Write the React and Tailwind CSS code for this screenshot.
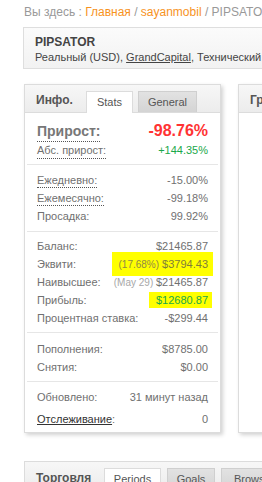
import React from "react";

const F = { fontFamily: '"Liberation Sans", Arial, sans-serif' };

function Row({ label, value, dotted, className = "", children }) {
  return (
    <div className={"flex items-center justify-between whitespace-nowrap h-[18px] " + className}>
      <span
        className={
          "leading-[14px] text-[#707070] " +
          (dotted ? "border-b border-dotted border-[#555]" : "")
        }
      >
        {label}
      </span>
      <span className="text-[#707070]">{children ?? value}</span>
    </div>
  );
}

function Divider() {
  return <div className="h-px bg-[#e6e6e6] mx-[-10px]" />;
}

export default function App() {
  return (
    <div
      className="w-[262px] h-[482px] overflow-hidden bg-white text-[11px]"
      style={F}
    >
      <div className="pl-[24px] pt-[4px] h-[27px] whitespace-nowrap text-[12px] leading-[16px] text-[#999]">
        Вы здесь : <span className="text-[#f7931e]">Главная</span> /{" "}
        <span className="text-[#f7931e]">sayanmobil</span> / PIPSATOR
      </div>

      <div className="ml-[23px] w-[320px] h-[42px] border border-[#dedede] bg-gradient-to-b from-[#fbfbfb] to-[#f2f2f2] pl-[11px] pt-[7px] whitespace-nowrap">
        <div className="font-bold text-[12px] leading-[15px] text-[#444]">PIPSATOR</div>
        <div className="text-[11px] leading-[14px] text-[#444]">
          Реальный (USD), <span className="underline">GrandCapital</span>, Технический
        </div>
      </div>

      <div className="flex gap-[17px] ml-[24px] mt-[15px]">
        <div className="w-[197px] h-[349px] shrink-0 border border-[#dcdcdc] bg-white shadow-[2px_2px_4px_rgba(0,0,0,0.18)] flex flex-col">
          <div className="h-[28px] shrink-0 bg-gradient-to-b from-[#f7f7f7] to-[#ececec] border-b border-[#dcdcdc] flex items-end pl-[11px]">
            <div className="font-bold text-[12px] text-[#555] self-center mt-[2px] w-[50px]">Инфо.</div>
            <div className="h-[22px] w-[47px] bg-white border border-[#dcdcdc] border-b-0 mb-[-1px] flex items-center justify-center text-[11px] text-[#555]">
              Stats
            </div>
            <div className="ml-[5px] h-[21px] w-[59px] bg-gradient-to-b from-[#e2e2e2] to-[#d4d4d4] border border-[#cfcfcf] border-b-0 flex items-center justify-center text-[11px] text-[#555]">
              General
            </div>
          </div>

          <div className="px-[12px] flex flex-col">
            <div className="pt-[8px] pb-[4px]">
              <div className="flex items-center justify-between h-[20px]">
                <span className="font-bold text-[14px] leading-[20px] text-[#777] border-b border-dotted border-[#555]">
                  Прирост:
                </span>
                <span className="font-bold text-[16px] text-[#ff3333]">-98.76%</span>
              </div>
              <div className="flex items-center justify-between h-[19px]">
                <span className="leading-[16px] text-[#707070] border-b border-dotted border-[#555]">
                  Абс. прирост:
                </span>
                <span className="text-[#1aa84a]">+144.35%</span>
              </div>
            </div>
            <Divider />
            <div className="pt-[6px] pb-[6px] flex flex-col">
              <Row label="Ежедневно:" value="-15.00%" dotted />
              <Row label="Ежемесячно:" value="-99.18%" dotted />
              <Row label="Просадка:" value="99.92%" />
            </div>
            <Divider />
            <div className="pt-[5px] pb-[5px] flex flex-col">
              <Row label="Баланс:" value="$21465.87" />
              <Row label="Эквити:">
                <span className="bg-[#ffff00] pl-[6px] pr-[5px] mr-[-5px] py-[6px] text-[#7f7d3a]">
                  <span className="text-[10px] text-[#8f8a45]">(17.68%)</span> $3794.43
                </span>
              </Row>
              <Row label="Наивысшее:">
                <span className="text-[10px] text-[#a8a8a8]">(May 29) </span>$21465.87
              </Row>
              <Row label="Прибыль:">
                <span className="bg-[#ffff00] pl-[7px] pr-[4px] mr-[-4px] py-[2px] text-[#1aa84a]">$12680.87</span>
              </Row>
              <Row label="Процентная ставка:" value="-$299.44" />
            </div>
            <Divider />
            <div className="pt-[7px] pb-[5px] flex flex-col">
              <Row label="Пополнения:" value="$8785.00" className="h-[17px]" />
              <Row label="Снятия:" value="$0.00" className="h-[17px]" />
            </div>
            <Divider />
            <div className="pt-[6px] flex flex-col">
              <Row label="Обновлено:" value="31 минут назад" className="h-[17px]" />
              <div className="flex items-center justify-between h-[17px] mt-[5px]">
                <span className="text-[#707070]">
                  <span className="underline text-[#333]">Отслеживание</span>:
                </span>
                <span className="text-[#707070]">0</span>
              </div>
            </div>
          </div>
        </div>

        <div className="w-[120px] h-[349px] shrink-0 border border-[#dcdcdc] bg-white shadow-[2px_2px_4px_rgba(0,0,0,0.18)]">
          <div className="h-[28px] bg-gradient-to-b from-[#f7f7f7] to-[#ececec] border-b border-[#dcdcdc] flex items-center pl-[11px] pt-[2px]">
            <span className="font-bold text-[12px] text-[#555]">График</span>
          </div>
        </div>
      </div>

      <div className="ml-[24px] mt-[28px] w-[320px] h-[40px] border border-[#dcdcdc]">
        <div className="h-[28px] bg-gradient-to-b from-[#f7f7f7] to-[#ececec] flex items-end pl-[11px]">
          <div className="font-bold text-[12px] text-[#555] self-center mt-[3px] w-[68px]">Торговля</div>
          <div className="h-[22px] w-[57px] bg-white border border-[#dcdcdc] border-b-0 flex items-center justify-center text-[11px] text-[#555]">
            Periods
          </div>
          <div className="ml-[6px] h-[22px] w-[48px] bg-gradient-to-b from-[#e2e2e2] to-[#d4d4d4] border border-[#cfcfcf] border-b-0 flex items-center justify-center text-[11px] text-[#555]">
            Goals
          </div>
          <div className="ml-[6px] h-[22px] w-[60px] bg-gradient-to-b from-[#e2e2e2] to-[#d4d4d4] border border-[#cfcfcf] border-b-0 flex items-center justify-start pl-[12px] text-[11px] text-[#555]">
            Browse
          </div>
        </div>
      </div>
    </div>
  );
}
